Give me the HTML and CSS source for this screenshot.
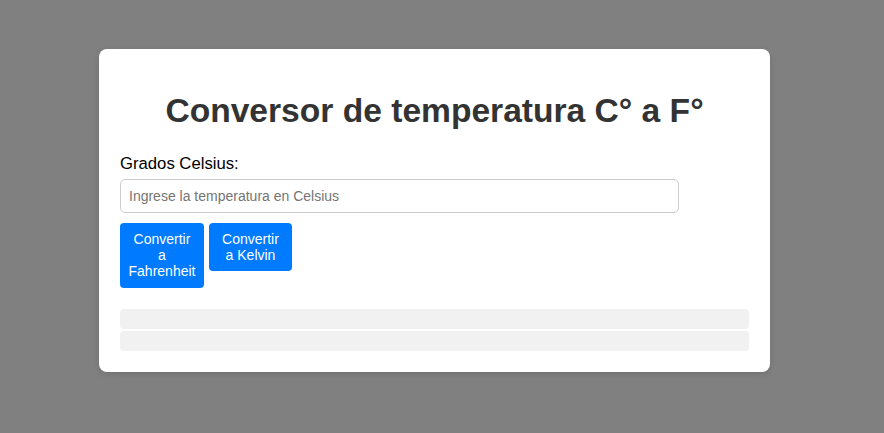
FILE: index.html
```html
<!DOCTYPE html>
<html lang="es">
<head>
<meta charset="utf-8">
<title>Conversor de temperatura</title>
<link rel="stylesheet" href="styles.css">
</head>
<body>
<main class="page">
  <section class="card">
    <h1 class="title">Conversor de temperatura C° a F°</h1>
    <label class="label" for="celsius">Grados Celsius:</label>
    <input class="field" id="celsius" type="text" placeholder="Ingrese la temperatura en Celsius">
    <div class="actions">
      <button class="btn btn-f" type="button">Convertir a Fahrenheit</button>
      <button class="btn btn-k" type="button">Convertir a Kelvin</button>
    </div>
    <div class="results">
      <div class="result"></div>
      <div class="result"></div>
    </div>
  </section>
</main>
</body>
</html>
```
FILE: styles.css
```css
html, body {
  margin: 0;
  height: 100%;
  background: #808080;
  font-family: "Liberation Sans", Arial, sans-serif;
}

.page {
  padding: 49px 0 0 99px;
}

.card {
  box-sizing: border-box;
  width: 671px;
  background: #fff;
  border-radius: 8px;
  padding: 20px 21px 21px;
  box-shadow: 0 2px 6px rgba(0, 0, 0, 0.12);
}

.title {
  margin: 23px 0 24px;
  text-align: center;
  font-size: 33.6px;
  font-weight: bold;
  color: #333;
}

.label {
  display: block;
  font-size: 16.7px;
  color: #000;
  margin-bottom: 5px;
}

.field {
  display: block;
  box-sizing: border-box;
  width: 559px;
  height: 34px;
  margin: 0;
  padding: 8px;
  border: 1px solid #ccc;
  border-radius: 5px;
  font-family: "Liberation Sans", Arial, sans-serif;
  font-size: 14px;
  color: #333;
}

.field::placeholder {
  color: #757575;
}

.actions {
  display: flex;
  align-items: flex-start;
  gap: 5px;
  margin-top: 10px;
}

.btn {
  box-sizing: border-box;
  padding: 8px 8px;
  border: none;
  border-radius: 4px;
  background: #007bff;
  color: #fff;
  font-family: "Liberation Sans", Arial, sans-serif;
  font-size: 14px;
  line-height: 16px;
  text-align: center;
}

.btn-f {
  width: 84px;
  padding-bottom: 9px;
}

.btn-k {
  width: 83px;
}

.results {
  display: flex;
  flex-direction: column;
  gap: 2px;
  margin-top: 21px;
}

.result {
  height: 20px;
  background: #f1f1f1;
  border-radius: 4px;
}
```
